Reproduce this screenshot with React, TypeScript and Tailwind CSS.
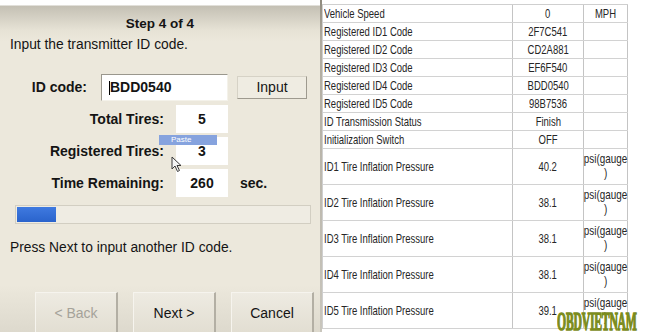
import React from "react";

const shortRows: [string, string, string][] = [
  ["Vehicle Speed", "0", "MPH"],
  ["Registered ID1 Code", "2F7C541", ""],
  ["Registered ID2 Code", "CD2A881", ""],
  ["Registered ID3 Code", "EF6F540", ""],
  ["Registered ID4 Code", "BDD0540", ""],
  ["Registered ID5 Code", "98B7536", ""],
  ["ID Transmission Status", "Finish", ""],
  ["Initialization Switch", "OFF", ""],
];

const tallRows: [string, string][] = [
  ["ID1 Tire Inflation Pressure", "40.2"],
  ["ID2 Tire Inflation Pressure", "38.1"],
  ["ID3 Tire Inflation Pressure", "38.1"],
  ["ID4 Tire Inflation Pressure", "38.1"],
  ["ID5 Tire Inflation Pressure", "39.1"],
];

function ValueBox({ children }: { children: React.ReactNode }) {
  return (
    <div className="w-[52px] h-[28px] bg-white flex items-center justify-center font-bold">
      {children}
    </div>
  );
}

function Narrow({ children, center }: { children: React.ReactNode; center?: boolean }) {
  return (
    <span
      className={
        center
          ? "inline-block whitespace-nowrap scale-x-[0.73] origin-center"
          : "inline-block whitespace-nowrap scale-x-[0.73] origin-left"
      }
    >
      {children}
    </span>
  );
}

export default function App() {
  return (
    <div className="relative flex w-[645px] h-[332px] overflow-hidden bg-white">
      {/* Left wizard panel */}
      <div className="relative w-[320px] h-full flex flex-col overflow-hidden text-[14px] text-[#141414] font-['Liberation_Sans',Arial,sans-serif] bg-[linear-gradient(to_bottom,#ffffff_0px,#ffffff_5px,#c4c0b4_6px,#e6e2d5_30px,#ece8dc_42px,#ece8dc_285px,#ddd9cd_332px)]">
        <div className="pt-[16px] h-[32px] leading-[16px] text-center font-bold text-[13.5px]">Step 4 of 4</div>
        <div className="mt-[5px] pl-[10px] leading-[16px] text-[13.8px]">Input the transmitter ID code.</div>

        {/* ID code row */}
        <div className="mt-[21px] flex items-center h-[27px]">
          <div className="w-[87px] text-right font-bold">ID code:</div>
          <div className="ml-[14px] w-[127px] h-[27px] bg-white border-t border-l border-[#9a978d] border-b border-r border-b-[#f4f2ea] border-r-[#f4f2ea] flex items-center pl-[7px] font-bold">
            <span className="w-[1px] h-[14px] bg-black" />
            BDD0540
          </div>
          <div className="ml-[9px] w-[70px] h-[23px] bg-[#efece2] border border-[#d6d2c6] border-r-[#9e9a8f] border-b-[#9e9a8f] flex items-center justify-center">
            Input
          </div>
        </div>

        {/* Totals */}
        <div className="mt-[4px] flex items-center">
          <div className="w-[164px] text-right font-bold">Total Tires:</div>
          <div className="ml-[12px]">
            <ValueBox>5</ValueBox>
          </div>
        </div>
        <div className="mt-[4px] flex items-center">
          <div className="w-[164px] text-right font-bold">Registered Tires:</div>
          <div className="ml-[12px]">
            <ValueBox>3</ValueBox>
          </div>
        </div>
        <div className="mt-[4px] flex items-center">
          <div className="w-[164px] text-right font-bold">Time Remaining:</div>
          <div className="ml-[12px]">
            <ValueBox>260</ValueBox>
          </div>
          <div className="ml-[12px] font-bold">sec.</div>
        </div>

        {/* Progress */}
        <div className="mt-[8px] ml-[15px] w-[296px] h-[24px] border border-[#d2cec2] bg-[#efece3] p-[1px]">
          <div className="w-[39px] h-full bg-[linear-gradient(to_bottom,#3f7ae0,#2a63cc)]" />
        </div>

        <div className="mt-[16px] pl-[10px] leading-[16px] text-[13.8px]">Press Next to input another ID code.</div>

        {/* Buttons */}
        <div className="mt-[36px] flex pl-[35px] gap-[15px]">
          <div className="w-[83px] h-[40px] border-l border-t border-[#f6f4ee] border-r-2 border-r-[#b3afa4] bg-[linear-gradient(to_bottom,#eeebe2,#e2ded2)] flex items-start pt-[10px] justify-center text-[#a5a299]">
            &lt; Back
          </div>
          <div className="w-[83px] h-[40px] border-l border-t border-[#f6f4ee] border-r-2 border-r-[#b3afa4] bg-[linear-gradient(to_bottom,#eeebe2,#e2ded2)] flex items-start pt-[10px] justify-center">
            Next &gt;
          </div>
          <div className="w-[83px] h-[40px] border-l border-t border-[#f6f4ee] border-r-2 border-r-[#b3afa4] bg-[linear-gradient(to_bottom,#eeebe2,#e2ded2)] flex items-start pt-[10px] justify-center">
            Cancel
          </div>
        </div>

        {/* Paste tooltip */}
        <div className="absolute left-[159px] top-[135px] w-[58px] h-[10px] bg-[#86a3de] text-white text-[8px] leading-[10px] pl-[12px] font-['Liberation_Sans',sans-serif]">
          Paste
        </div>
        {/* Cursor */}
        <svg className="absolute left-[171px] top-[156px]" width="11" height="17" viewBox="0 0 11 17">
          <path d="M1 1 L1 13 L4 10 L6.5 15.5 L8.5 14.5 L6 9.5 L10 9.5 Z" fill="#f4f4f4" stroke="#3a3a3a" strokeWidth="1" strokeLinejoin="round" />
        </svg>
      </div>

      {/* Divider */}
      <div className="w-[2px] h-full bg-[linear-gradient(to_bottom,#8f8a7e,#b0ab9f_40px,#c9c6bd)]" />

      {/* Right data table */}
      <div className="flex-1 pt-[4px] bg-white text-[13px] text-[#262626] font-['Liberation_Sans',Arial,sans-serif]">
        <div className="w-[306px] border-l border-t border-[#cfcfcf]">
          {shortRows.map(([a, b, c]) => (
            <div key={a} className="flex h-[18px] border-b border-[#d2d2d2]">
              <div className="w-[190px] border-r border-[#c4c4c4] pl-[1px] leading-[17px] overflow-hidden">
                <Narrow>{a}</Narrow>
              </div>
              <div className="w-[71px] border-r border-[#c4c4c4] text-center leading-[17px]">
                <Narrow center>{b}</Narrow>
              </div>
              <div className="w-[44px] border-r border-[#c4c4c4] text-center leading-[17px]">
                <Narrow center>{c}</Narrow>
              </div>
            </div>
          ))}
          {tallRows.map(([a, b]) => (
            <div key={a} className="flex h-[36px] border-b border-[#d2d2d2]">
              <div className="w-[190px] border-r border-[#c4c4c4] pl-[1px] flex items-center overflow-hidden">
                <Narrow>{a}</Narrow>
              </div>
              <div className="w-[71px] border-r border-[#c4c4c4] flex items-center justify-center">
                <Narrow center>{b}</Narrow>
              </div>
              <div className="w-[44px] border-r border-[#c4c4c4] flex justify-center leading-[14px] pt-[3px]">
                <span className="inline-block whitespace-nowrap scale-x-[0.76] origin-center text-center">
                  psi(gauge
                  <br />)
                </span>
              </div>
            </div>
          ))}
        </div>
      </div>

      {/* Watermark */}
      <div className="absolute left-[557px] top-[310px] origin-left scale-x-[0.45] whitespace-nowrap text-[26px] leading-[24px] font-bold text-[#7b8c1c] font-['Liberation_Serif',serif] tracking-[-0.5px] [-webkit-text-stroke:1.5px_#7b8c1c]">
        OBDVIETNAM
      </div>
    </div>
  );
}
